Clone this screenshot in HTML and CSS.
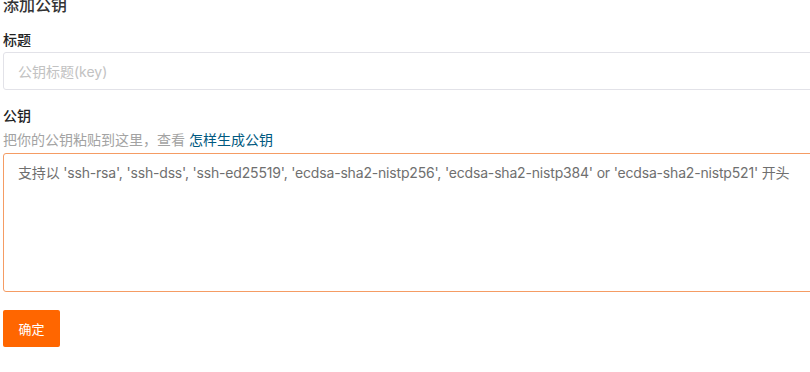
FILE: index.html
```html
<!DOCTYPE html>
<html lang="zh">
<head>
<meta charset="utf-8">
<title>添加公钥</title>
<link rel="stylesheet" href="styles.css">
</head>
<body>
<div class="page">
  <h3 class="title">添加公钥</h3>
  <form class="form">
    <div class="field">
      <label class="label" for="t">标题</label>
      <input class="input" id="t" type="text" placeholder="公钥标题(key)">
    </div>
    <div class="field field-key">
      <label class="label" for="k">公钥</label>
      <div class="help">把你的公钥粘贴到这里，查看 <a class="link" href="#">怎样生成公钥</a></div>
      <div class="textarea-box">
        <textarea class="textarea" id="k" placeholder="支持以 'ssh-rsa', 'ssh-dss', 'ssh-ed25519', 'ecdsa-sha2-nistp256', 'ecdsa-sha2-nistp384' or 'ecdsa-sha2-nistp521' 开头"></textarea>
      </div>
    </div>
    <button class="btn" type="button">确定</button>
  </form>
</div>
</body>
</html>
```
FILE: styles.css
```css
html, body {
  margin: 0;
  padding: 0;
  background: #fff;
  overflow: hidden;
}
body {
  font-family: Inter, "Noto Sans CJK SC", sans-serif;
  color: #333;
  font-size: 14px;
}
.page {
  width: 860px;
  padding-left: 3px;
  margin-top: -6px;
}
.title {
  margin: 0;
  font-size: 16px;
  line-height: 22px;
  font-weight: 500;
  color: #333;
}
.form {
  margin-top: 14px;
}
.field {
  display: flex;
  flex-direction: column;
}
.field-key {
  margin-top: 16px;
}
.label {
  font-size: 14px;
  line-height: 20px;
  font-weight: 500;
  color: #222;
  margin-bottom: 2px;
}
.input {
  -webkit-appearance: none;
  appearance: none;
  box-sizing: border-box;
  height: 38px;
  border: 1px solid #e2e2e8;
  border-radius: 3px;
  padding: 0 14px;
  font: inherit;
  font-size: 14px;
  color: #333;
  outline: none;
}
.input::placeholder {
  color: #c2c2c2;
}
.help {
  font-size: 14px;
  line-height: 20px;
  color: #a3a3a3;
  margin-top: 2px;
}
.link {
  color: #005980;
  text-decoration: none;
}
.textarea-box {
  margin-top: 3px;
  height: 139px;
  box-sizing: border-box;
  border: 1px solid #f59c64;
  border-radius: 3px;
  display: flex;
}
.textarea {
  -webkit-appearance: none;
  appearance: none;
  flex: 1;
  box-sizing: border-box;
  border: none;
  background: transparent;
  padding: 9px 14px;
  font: inherit;
  font-size: 14px;
  line-height: 20px;
  letter-spacing: -0.18px;
  color: #333;
  resize: none;
  outline: none;
}
.textarea::placeholder {
  color: #6f6f6f;
}
.btn {
  display: block;
  margin-top: 18px;
  width: 57px;
  height: 37px;
  border: none;
  border-radius: 2px;
  background: #ff6600;
  color: #fff;
  font: inherit;
  font-size: 13px;
  padding: 0;
  cursor: pointer;
}
```
